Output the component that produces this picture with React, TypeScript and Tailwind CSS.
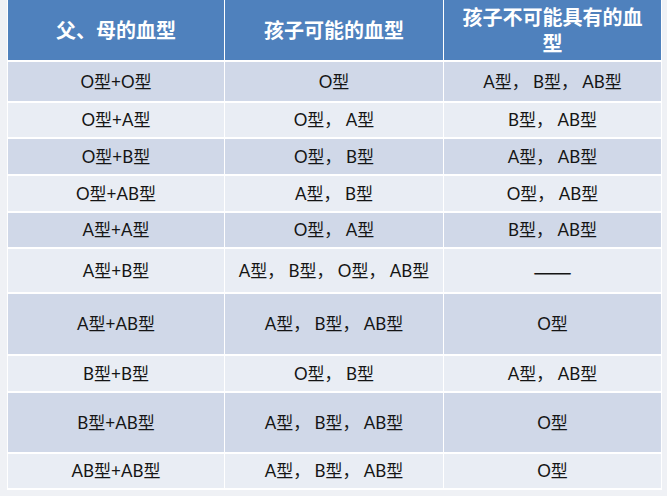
import React from "react";

const rows: { h: string; c: [string, string, string] }[] = [
  { h: "h-[39px]", c: ["O型+O型", "O型", "A型， B型， AB型"] },
  { h: "h-[34px]", c: ["O型+A型", "O型， A型", "B型， AB型"] },
  { h: "h-[35px]", c: ["O型+B型", "O型， B型", "A型， AB型"] },
  { h: "h-[35px]", c: ["O型+AB型", "A型， B型", "O型， AB型"] },
  { h: "h-[34px]", c: ["A型+A型", "O型， A型", "B型， AB型"] },
  { h: "h-[43px]", c: ["A型+B型", "A型， B型， O型， AB型", "——"] },
  { h: "h-[60px]", c: ["A型+AB型", "A型， B型， AB型", "O型"] },
  { h: "h-[35px]", c: ["B型+B型", "O型， B型", "A型， AB型"] },
  { h: "h-[59px]", c: ["B型+AB型", "A型， B型， AB型", "O型"] },
  { h: "h-[34px]", c: ["AB型+AB型", "A型， B型， AB型", "O型"] },
];

export default function App() {
  return (
    <div className="w-[667px] h-[496px] bg-[#eff1f5] pl-[7px]">
      <div className="grid grid-cols-[216px_218px_217px] gap-x-px gap-y-[2px] bg-white px-px pb-[2px] w-[655px] font-['Lato','Noto_Sans_CJK_SC',sans-serif]">
        {["父、母的血型", "孩子可能的血型", "孩子不可能具有的血型"].map((t, i) => (
          <div
            key={i}
            className="h-[60px] bg-[#4f81bd] flex items-center justify-center text-center px-[10px] text-white text-[20px] leading-[26px] font-bold font-['Noto_Sans_CJK_SC',sans-serif]"
          >
            <span>{t}</span>
          </div>
        ))}
        {rows.map((r, ri) =>
          r.c.map((t, ci) => (
            <div
              key={`${ri}-${ci}`}
              className={`${r.h} ${ri % 2 === 0 ? "bg-[#d0d8e8]" : "bg-[#e9edf4]"} flex items-center justify-center whitespace-nowrap text-[17px] text-[#151515]`}
            >
              {t === "——" ? (
                <span className="font-['Noto_Sans_CJK_SC',sans-serif] text-[23px] leading-none">{t}</span>
              ) : (
                t
              )}
            </div>
          ))
        )}
      </div>
    </div>
  );
}
